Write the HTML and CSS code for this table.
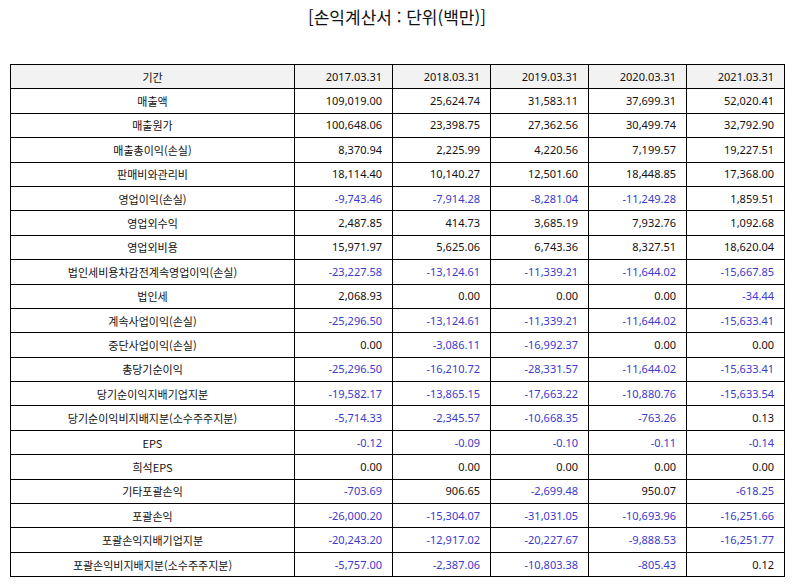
FILE: index.html
```html
<!DOCTYPE html>
<html lang="ko">
<head>
<meta charset="utf-8">
<link rel="stylesheet" href="styles.css">
</head>
<body>
<h1 class="title">[손익계산서 : 단위(백만)]</h1>
<table class="fin">
<colgroup><col class="c-label"><col class="c-num"><col class="c-num"><col class="c-num"><col class="c-num"><col class="c-num"></colgroup>
<thead>
<tr><th class="label">기간</th><th>2017.03.31</th><th>2018.03.31</th><th>2019.03.31</th><th>2020.03.31</th><th>2021.03.31</th></tr>
</thead>
<tbody>
<tr><td class="label">매출액</td><td>109,019.00</td><td>25,624.74</td><td>31,583.11</td><td>37,699.31</td><td>52,020.41</td></tr>
<tr><td class="label">매출원가</td><td>100,648.06</td><td>23,398.75</td><td>27,362.56</td><td>30,499.74</td><td>32,792.90</td></tr>
<tr><td class="label">매출총이익(손실)</td><td>8,370.94</td><td>2,225.99</td><td>4,220.56</td><td>7,199.57</td><td>19,227.51</td></tr>
<tr><td class="label">판매비와관리비</td><td>18,114.40</td><td>10,140.27</td><td>12,501.60</td><td>18,448.85</td><td>17,368.00</td></tr>
<tr><td class="label">영업이익(손실)</td><td class="neg">-9,743.46</td><td class="neg">-7,914.28</td><td class="neg">-8,281.04</td><td class="neg">-11,249.28</td><td>1,859.51</td></tr>
<tr><td class="label">영업외수익</td><td>2,487.85</td><td>414.73</td><td>3,685.19</td><td>7,932.76</td><td>1,092.68</td></tr>
<tr><td class="label">영업외비용</td><td>15,971.97</td><td>5,625.06</td><td>6,743.36</td><td>8,327.51</td><td>18,620.04</td></tr>
<tr><td class="label">법인세비용차감전계속영업이익(손실)</td><td class="neg">-23,227.58</td><td class="neg">-13,124.61</td><td class="neg">-11,339.21</td><td class="neg">-11,644.02</td><td class="neg">-15,667.85</td></tr>
<tr><td class="label">법인세</td><td>2,068.93</td><td>0.00</td><td>0.00</td><td>0.00</td><td class="neg">-34.44</td></tr>
<tr><td class="label">계속사업이익(손실)</td><td class="neg">-25,296.50</td><td class="neg">-13,124.61</td><td class="neg">-11,339.21</td><td class="neg">-11,644.02</td><td class="neg">-15,633.41</td></tr>
<tr><td class="label">중단사업이익(손실)</td><td>0.00</td><td class="neg">-3,086.11</td><td class="neg">-16,992.37</td><td>0.00</td><td>0.00</td></tr>
<tr><td class="label">총당기순이익</td><td class="neg">-25,296.50</td><td class="neg">-16,210.72</td><td class="neg">-28,331.57</td><td class="neg">-11,644.02</td><td class="neg">-15,633.41</td></tr>
<tr><td class="label">당기순이익지배기업지분</td><td class="neg">-19,582.17</td><td class="neg">-13,865.15</td><td class="neg">-17,663.22</td><td class="neg">-10,880.76</td><td class="neg">-15,633.54</td></tr>
<tr><td class="label">당기순이익비지배지분(소수주주지분)</td><td class="neg">-5,714.33</td><td class="neg">-2,345.57</td><td class="neg">-10,668.35</td><td class="neg">-763.26</td><td>0.13</td></tr>
<tr><td class="label">EPS</td><td class="neg">-0.12</td><td class="neg">-0.09</td><td class="neg">-0.10</td><td class="neg">-0.11</td><td class="neg">-0.14</td></tr>
<tr><td class="label">희석EPS</td><td>0.00</td><td>0.00</td><td>0.00</td><td>0.00</td><td>0.00</td></tr>
<tr><td class="label">기타포괄손익</td><td class="neg">-703.69</td><td>906.65</td><td class="neg">-2,699.48</td><td>950.07</td><td class="neg">-618.25</td></tr>
<tr><td class="label">포괄손익</td><td class="neg">-26,000.20</td><td class="neg">-15,304.07</td><td class="neg">-31,031.05</td><td class="neg">-10,693.96</td><td class="neg">-16,251.66</td></tr>
<tr><td class="label">포괄손익지배기업지분</td><td class="neg">-20,243.20</td><td class="neg">-12,917.02</td><td class="neg">-20,227.67</td><td class="neg">-9,888.53</td><td class="neg">-16,251.77</td></tr>
<tr><td class="label">포괄손익비지배지분(소수주주지분)</td><td class="neg">-5,757.00</td><td class="neg">-2,387.06</td><td class="neg">-10,803.38</td><td class="neg">-805.43</td><td>0.12</td></tr>
</tbody>
</table>
</body>
</html>
```

FILE: styles.css
```css
html, body {
  margin: 0;
  padding: 0;
  background: #fff;
}
body {
  font-family: "Noto Sans", "Noto Sans CJK KR", sans-serif;
  color: #111;
}
.title {
  margin: 0;
  padding-top: 5px;
  height: 64px;
  box-sizing: border-box;
  text-align: center;
  font-family: "Noto Sans CJK KR", sans-serif;
  font-size: 17px;
  font-weight: normal;
  line-height: 24px;
  color: #111;
}
.fin {
  margin-left: 10px;
  width: 775px;
  border-collapse: collapse;
  table-layout: fixed;
  font-size: 11px;
}
.c-label { width: 284px; }
.c-num { width: 98px; }
.fin th, .fin td {
  border: 1px solid #000;
  height: 23.4px;
  padding: 0 10px 0 4px;
  text-align: right;
  font-weight: normal;
  line-height: 14px;
  white-space: nowrap;
}
.fin thead th {
  background: #f2f2f2;
}
.fin .label {
  text-align: center;
  padding: 0 4px;
  font-family: "Noto Sans CJK KR", sans-serif;
}
.fin .neg {
  color: #3a3acc;
}
```
